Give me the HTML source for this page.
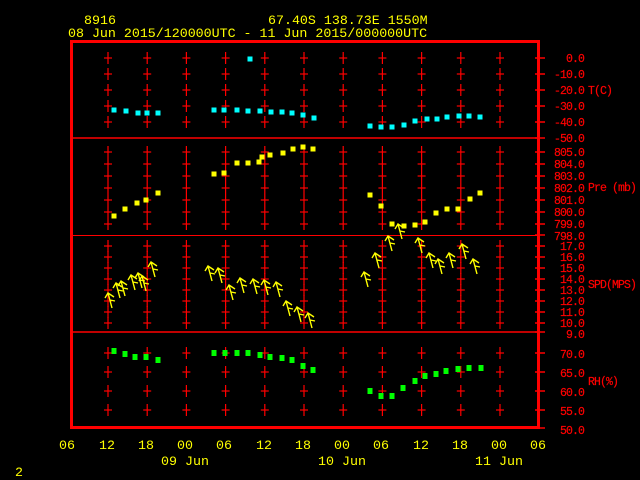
<!DOCTYPE html>
<html><head><meta charset="utf-8"><style>
html,body{margin:0;padding:0;background:#000;}
svg{display:block}
text{font-family:"Liberation Mono",monospace;}
</style></head><body>
<svg width="640" height="480" viewBox="0 0 640 480" xmlns="http://www.w3.org/2000/svg">
<rect width="640" height="480" fill="#000"/>
<g fill="#ffff00" font-size="13.3">
<text x="84" y="24">8916</text>
<text x="268" y="24">67.40S  138.73E  1550M</text>
<text x="68" y="37">08 Jun 2015/120000UTC - 11 Jun 2015/000000UTC</text>
</g>
<g stroke="#ff0000" fill="none">
<rect x="71.5" y="41.5" width="467" height="386" stroke-width="3"/>
<line x1="70" y1="138" x2="540" y2="138" stroke-width="1.5"/>
<line x1="70" y1="235.5" x2="540" y2="235.5" stroke-width="1"/>
<line x1="70" y1="332" x2="540" y2="332" stroke-width="1.5"/>
</g>
<g id="grid" stroke="#ff0000" stroke-width="1.2"></g>
<g fill="#ff0000" font-size="11.5" letter-spacing="-0.9" text-anchor="end" stroke="#ff0000" stroke-width="0.2">
<text x="584" y="62">0.0</text><text x="584" y="78">-10.0</text><text x="584" y="94">-20.0</text><text x="584" y="110">-30.0</text><text x="584" y="126">-40.0</text><text x="584" y="142">-50.0</text>
<text x="584" y="156">805.0</text><text x="584" y="168">804.0</text><text x="584" y="180">803.0</text><text x="584" y="192">802.0</text><text x="584" y="204">801.0</text><text x="584" y="216">800.0</text><text x="584" y="228">799.0</text><text x="584" y="240">798.0</text>
<text x="584" y="250">17.0</text><text x="584" y="261">16.0</text><text x="584" y="272">15.0</text><text x="584" y="283">14.0</text><text x="584" y="294">13.0</text><text x="584" y="305">12.0</text><text x="584" y="316">11.0</text><text x="584" y="327">10.0</text><text x="584" y="338">9.0</text>
<text x="584" y="358">70.0</text><text x="584" y="377">65.0</text><text x="584" y="396">60.0</text><text x="584" y="415">55.0</text><text x="584" y="434">50.0</text>
</g>
<g fill="#ff0000" font-size="11.5" letter-spacing="-0.9" stroke="#ff0000" stroke-width="0.2">
<text x="588" y="94">T(C)</text><text x="588" y="191">Pre (mb)</text><text x="588" y="288">SPD(MPS)</text><text x="588" y="385">RH(%)</text>
</g>
<g fill="#ffff00" font-size="13.3" text-anchor="middle">
<text x="67" y="449">06</text><text x="107" y="449">12</text><text x="146" y="449">18</text><text x="185" y="449">00</text><text x="224" y="449">06</text><text x="264" y="449">12</text><text x="303" y="449">18</text><text x="342" y="449">00</text><text x="381" y="449">06</text><text x="421" y="449">12</text><text x="460" y="449">18</text><text x="499" y="449">00</text><text x="538" y="449">06</text>
<text x="185" y="465">09 Jun</text><text x="342" y="465">10 Jun</text><text x="499" y="465">11 Jun</text>
<text x="19" y="476">2</text>
</g>
<g id="pts"></g>
<g id="wind" stroke="#ffff00" stroke-width="1.4" fill="none"></g>
<script>
var ns="http://www.w3.org/2000/svg";
function el(p,t,a){var e=document.createElementNS(ns,t);for(var k in a)e.setAttribute(k,a[k]);p.appendChild(e);return e;}
var g=document.getElementById("grid");
var cols=[];for(var i=0;i<11;i++)cols.push(108+i*39.2);
var panels=[[46,134,[58,74,90,106,122]],[142,232,[152,164,176,188,200,212,224]],[238,330,[246,257,268,279,290,301,312,323]],[336,424,[353,372,391,410]]];
panels.forEach(function(p){
 cols.forEach(function(x){
  p[2].forEach(function(y){
   el(g,"line",{x1:x,y1:y-6,x2:x,y2:y+6});
   el(g,"line",{x1:x-4,y1:y,x2:x+4,y2:y});
  });
 });
 p[2].forEach(function(y){el(g,"line",{x1:535,y1:y,x2:545,y2:y,"stroke-width":1.5});});
});
[138,235,332,428].forEach(function(y){el(g,"line",{x1:535,y1:y,x2:545,y2:y,"stroke-width":1.5});});
var P=document.getElementById("pts");
var T=[[114,110],[126,111],[138,113],[147,113],[158,113],[214,110],[224,110],[237,110],[248,111],[260,111],[271,112],[282,112],[292,113],[303,115],[314,118],[370,126],[381,127],[392,127],[404,125],[415,121],[427,119],[437,119],[447,117],[459,116],[469,116],[480,117],[250,59]];
T.forEach(function(p){el(P,"rect",{x:p[0]-2.5,y:p[1]-2.5,width:5,height:5,fill:"#00ffff"});});
var Pr=[[114,216],[125,209],[137,203],[146,200],[158,193],[214,174],[224,173],[237,163],[248,163],[259,162],[262,157],[270,155],[283,153],[293,149],[303,147],[313,149],[370,195],[381,206],[392,224],[404,226],[415,225],[425,222],[436,213],[447,209],[458,209],[470,199],[480,193]];
Pr.forEach(function(p){el(P,"rect",{x:p[0]-2.5,y:p[1]-2.5,width:5,height:5,fill:"#ffff00"});});
var RH=[[114,351],[125,354],[135,357],[146,357],[158,360],[214,353],[225,353],[237,353],[248,353],[260,355],[270,357],[282,358],[292,360],[303,366],[313,370],[370,391],[381,396],[392,396],[403,388],[415,381],[425,376],[436,374],[446,371],[458,369],[469,368],[481,368]];
RH.forEach(function(p){el(P,"rect",{x:p[0]-2.5,y:p[1]-3,width:5,height:6,fill:"#00ff00"});});
var W=document.getElementById("wind");
var wp=[[112,308],[120,298],[125,296],[135,290],[142,288],[146,291],[155,277],[212,281],[222,283],[233,300],[244,293],[257,294],[268,295],[280,297],[290,316],[301,322],[312,328],[368,287],[379,268],[392,251],[402,239],[422,253],[433,268],[442,274],[453,268],[466,259],[477,274]];
wp.forEach(function(p){
 var x=p[0],y=p[1];
 el(W,"path",{d:"M"+x+" "+y+" L"+(x-4)+" "+(y-15)+" M"+(x-7)+" "+(y-10)+" L"+(x-4)+" "+(y-15)+" L"+(x+2)+" "+(y-11)+" M"+(x-2)+" "+(y-8)+" L"+(x+3)+" "+(y-7)});
});
</script>
</svg>
</body></html>
